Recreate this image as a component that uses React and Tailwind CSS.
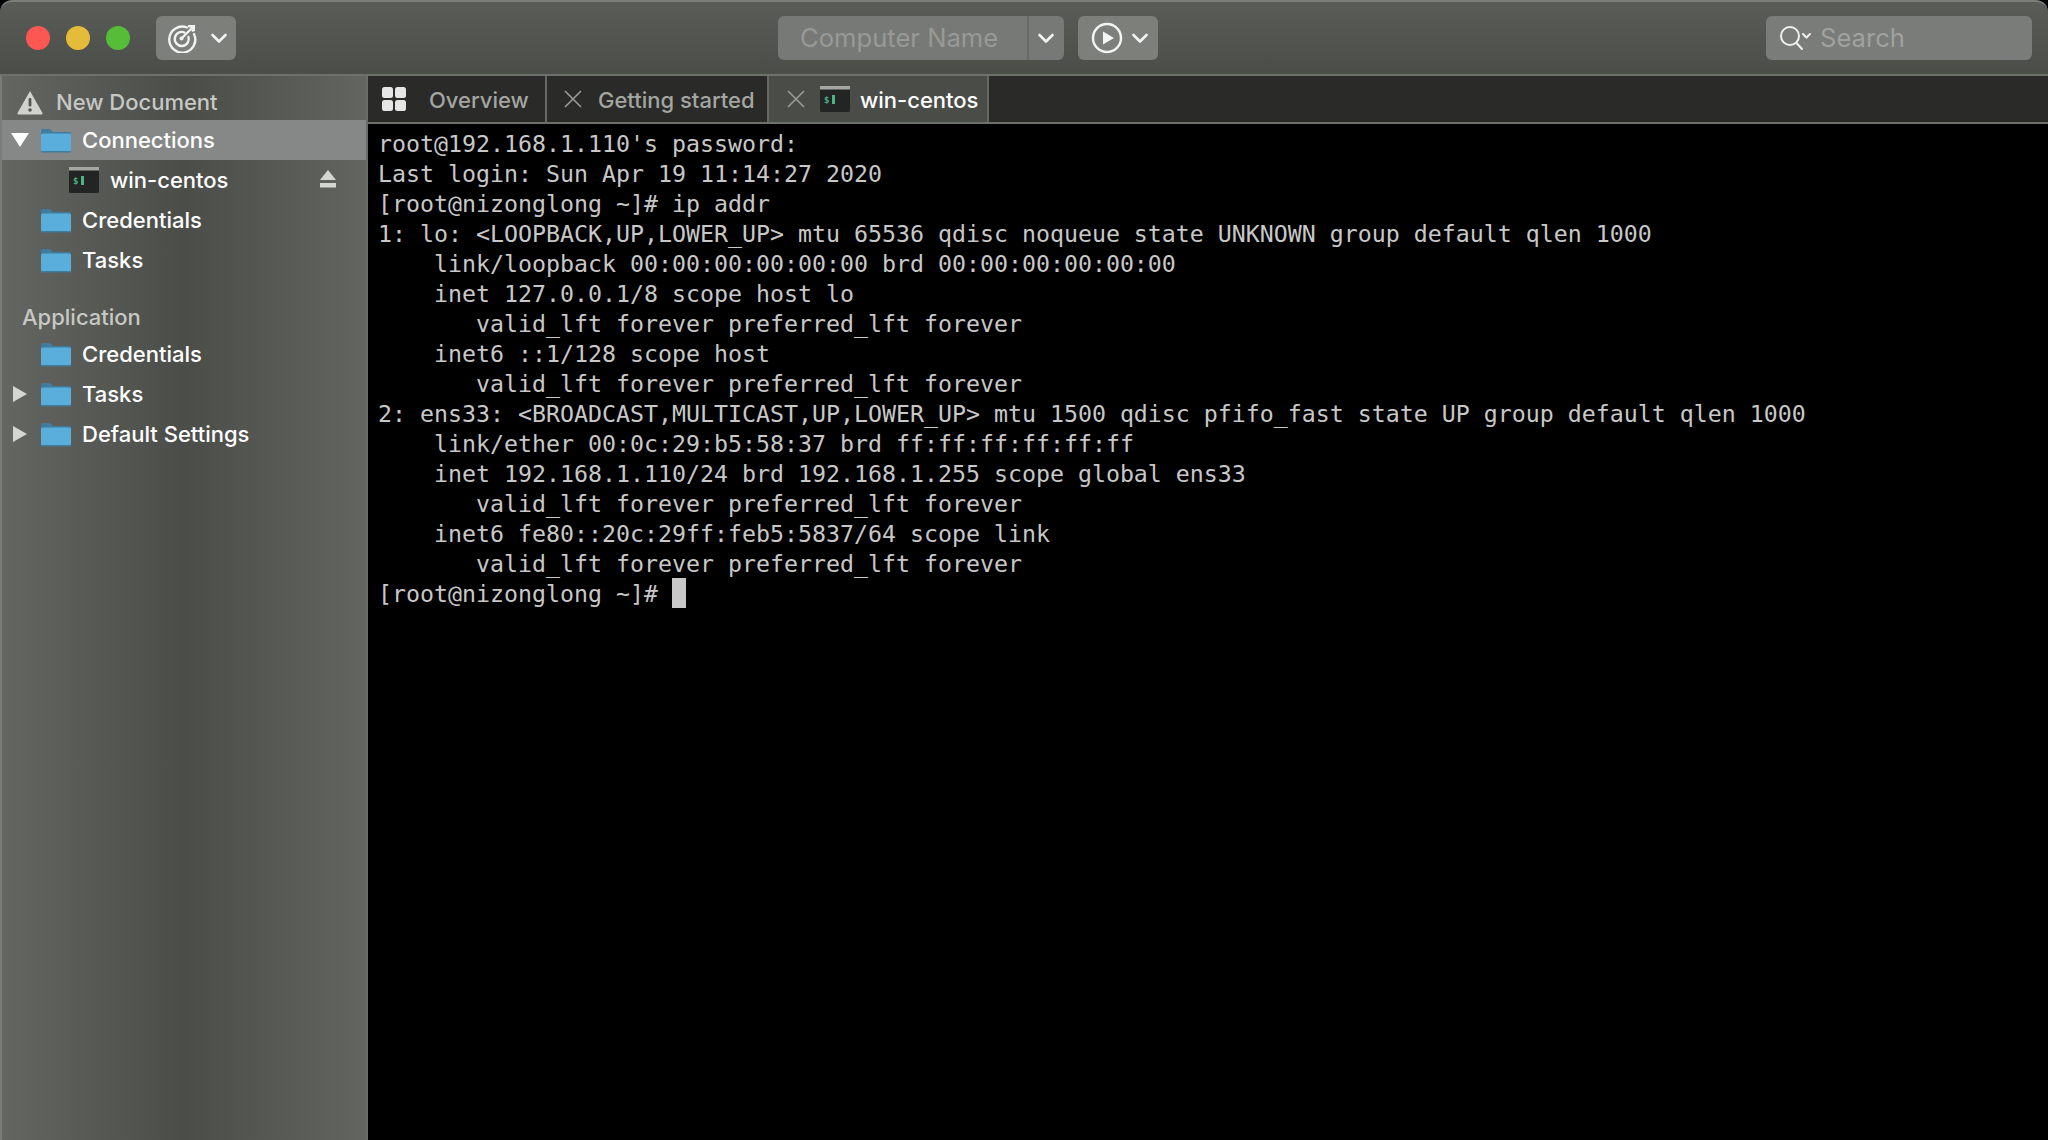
const terminalLines = [
  "root@192.168.1.110's password:",
  "Last login: Sun Apr 19 11:14:27 2020",
  "[root@nizonglong ~]# ip addr",
  "1: lo: <LOOPBACK,UP,LOWER_UP> mtu 65536 qdisc noqueue state UNKNOWN group default qlen 1000",
  "    link/loopback 00:00:00:00:00:00 brd 00:00:00:00:00:00",
  "    inet 127.0.0.1/8 scope host lo",
  "       valid_lft forever preferred_lft forever",
  "    inet6 ::1/128 scope host",
  "       valid_lft forever preferred_lft forever",
  "2: ens33: <BROADCAST,MULTICAST,UP,LOWER_UP> mtu 1500 qdisc pfifo_fast state UP group default qlen 1000",
  "    link/ether 00:0c:29:b5:58:37 brd ff:ff:ff:ff:ff:ff",
  "    inet 192.168.1.110/24 brd 192.168.1.255 scope global ens33",
  "       valid_lft forever preferred_lft forever",
  "    inet6 fe80::20c:29ff:feb5:5837/64 scope link",
  "       valid_lft forever preferred_lft forever",
];

function Chevron() {
  return (
    <svg width="16" height="11" viewBox="0 0 16 11" fill="none" stroke="#f2f2f2" strokeWidth="2.6" strokeLinecap="round" strokeLinejoin="round" className="shrink-0">
      <path d="M1.5 2l6.5 6.5L14.5 2" />
    </svg>
  );
}

function CloseIcon() {
  return (
    <svg width="18" height="18" viewBox="0 0 18 18" fill="none" stroke="#9a9c98" strokeWidth="1.6" className="shrink-0">
      <path d="M1 1l16 16M17 1L1 17" />
    </svg>
  );
}

function Folder() {
  return (
    <svg width="30" height="25" viewBox="0 0 30 25" className="shrink-0">
      <path d="M0 3a2 2 0 0 1 2-2h7l3 3h16a2 2 0 0 1 2 2v4H0z" fill="#3f7c9f" />
      <path d="M0 7a1.5 1.5 0 0 1 1.5-1.5h27A1.5 1.5 0 0 1 30 7v15a2 2 0 0 1-2 2H2a2 2 0 0 1-2-2z" fill="#5aaedb" />
      <rect x="0" y="23" width="30" height="1.5" rx="0.7" fill="#3f7c9f" />
    </svg>
  );
}

function TerminalIcon() {
  return (
    <svg width="30" height="26" viewBox="0 0 30 26" className="shrink-0">
      <rect x="0" y="0" width="30" height="26" rx="1.5" fill="#232524" />
      <rect x="0" y="0" width="30" height="3.5" fill="#a5a7a3" />
      <text x="4" y="17" fontSize="9" fontWeight="700" fill="#4fb286" fontFamily="DejaVu Sans Mono, monospace">$</text>
      <rect x="12" y="9" width="3" height="9" fill="#4fb286" />
    </svg>
  );
}

function TreeArrow({ open }) {
  return (
    <svg width="18" height="16" viewBox="0 0 18 16" className="shrink-0">
      {open ? (
        <path d="M0 1h18L9 15z" fill="#ffffff" />
      ) : (
        <path d="M2 0l14 8-14 8z" fill="#d4d6d2" />
      )}
    </svg>
  );
}

function TreeRow({ label, arrow, open, selected }) {
  return (
    <div className={`flex h-10 items-center ${selected ? "bg-[#858886]" : ""}`}>
      <div className="ml-[9px] flex w-[30px] shrink-0 items-center">
        {arrow && <TreeArrow open={open} />}
      </div>
      <Folder />
      <span className="ml-[11px] text-[22px] font-medium text-white">{label}</span>
    </div>
  );
}

export default function App() {
  return (
    <div className="flex h-[1140px] w-[2048px] flex-col overflow-hidden bg-black font-['Inter',sans-serif]">
      <div className="flex h-[76px] shrink-0 items-center rounded-t-[12px] border-t-2 border-b-2 border-t-[#7b7d79] border-b-[#6f716d] bg-gradient-to-b from-[#5a5c58] to-[#4b4d49] pl-[26px] pr-4">
        <div className="flex gap-[16px]">
          <div className="h-6 w-6 rounded-full bg-[#fd5754]" />
          <div className="h-6 w-6 rounded-full bg-[#e4bc3a]" />
          <div className="h-6 w-6 rounded-full bg-[#56bd39]" />
        </div>
        <div className="ml-[26px] flex h-11 w-20 items-center gap-[14px] rounded-[6px] bg-[#7c7f7a] pl-[11px]">
          <svg width="30" height="30" viewBox="0 0 30 30" fill="none" stroke="#f2f2f2" strokeWidth="2.4" strokeLinecap="round" className="shrink-0">
            <path d="M20 4.5A13 13 0 1 0 27 11" />
            <path d="M17.5 9.5A7 7 0 1 0 21.5 14" />
            <circle cx="14.5" cy="15.5" r="2" fill="#f2f2f2" stroke="none" />
            <path d="M15 15L24 6" />
            <path d="M21 2h7v6l-3 1-1-4-3-1z" fill="#f2f2f2" stroke="none" />
          </svg>
          <Chevron />
        </div>

        <div className="ml-[542px] flex h-11 w-[286px] items-center rounded-[6px] bg-[#767975]">
          <span className="flex-1 pl-[22px] text-[25.6px] text-[#989a96]">Computer Name</span>
          <div className="flex h-full w-[37px] items-center justify-center border-l-2 border-[#666965] pr-[2px]">
            <Chevron />
          </div>
        </div>
        <div className="ml-[14px] flex h-11 w-20 items-center gap-[9px] rounded-[6px] bg-[#7c7f7a] pl-[13px]">
          <svg width="32" height="32" viewBox="0 0 32 32" fill="none" className="shrink-0">
            <circle cx="16" cy="16" r="14" stroke="#f4f4f4" strokeWidth="2.4" />
            <path d="M12 9.5L23 16l-11 6.5z" fill="#f4f4f4" />
          </svg>
          <Chevron />
        </div>

        <div className="ml-auto flex h-11 w-[266px] items-center rounded-[6px] bg-[#797c78] pl-3">
          <svg width="34" height="30" viewBox="0 0 34 30" fill="none" stroke="#f0f0f0" strokeLinecap="round" className="shrink-0">
            <circle cx="12" cy="13" r="9" strokeWidth="2" />
            <path d="M18.5 20L24 26" strokeWidth="2" />
            <path d="M25 11l3.5 3.5L32 11" strokeWidth="2" />
          </svg>
          <span className="ml-[8px] text-[25.6px] text-[#a0a29e]">Search</span>
        </div>
      </div>

      <div className="flex min-h-0 flex-1">
        <aside className="flex w-[368px] shrink-0 flex-col border-x-2 border-l-[#7a7c78] border-r-[#6a6c68] bg-gradient-to-r from-[#646662] via-[#4b4d49] via-50% to-[#636561]">
          <div className="flex h-[44px] items-center pl-[15px] pt-[8px]">
            <svg width="26" height="25" viewBox="0 0 26 25" className="shrink-0">
              <path d="M13 1L25.5 23a1 1 0 0 1-1 1.5H1.5a1 1 0 0 1-1-1.5z" fill="#d0d2ce" />
              <rect x="11.6" y="8" width="2.8" height="8.5" rx="1" fill="#565854" />
              <circle cx="13" cy="20" r="1.8" fill="#565854" />
            </svg>
            <span className="ml-[13px] text-[22px] font-medium text-[#c6c8c4]">New Document</span>
          </div>
          <TreeRow label="Connections" arrow open selected />
          <div className="flex h-10 items-center pl-[67px] pr-[30px]">
            <TerminalIcon />
            <span className="ml-[11px] text-[22px] font-medium text-white">win-centos</span>
            <svg width="16" height="18" viewBox="0 0 16 18" className="ml-auto -translate-y-[1px]">
              <path d="M8 0l8 10H0z" fill="#d4d6d2" />
              <rect x="0" y="13" width="16" height="4.5" fill="#d4d6d2" />
            </svg>
          </div>
          <TreeRow label="Credentials" />
          <TreeRow label="Tasks" />
          <div className="flex h-[54px] items-center pl-5 pt-[19px] text-[22px] font-medium leading-none text-[#c6c8c4]">
            Application
          </div>
          <TreeRow label="Credentials" />
          <TreeRow label="Tasks" arrow />
          <TreeRow label="Default Settings" arrow />
        </aside>

        <main className="flex min-w-0 flex-1 flex-col">
          <div className="flex h-[48px] shrink-0 border-b-2 border-[#6e706c] bg-[#2a2a28] text-[22px] font-medium">
            <div className="flex w-[179px] shrink-0 items-center border-r-2 border-[#666864] pl-[14px] text-[#a3a5a1]">
              <svg width="24" height="24" viewBox="0 0 24 24" className="shrink-0" fill="#e6e6e6">
                <rect x="0" y="0" width="11" height="11" rx="2.5" />
                <rect x="13" y="0" width="11" height="11" rx="2.5" />
                <rect x="0" y="13" width="11" height="11" rx="2.5" />
                <rect x="13" y="13" width="11" height="11" rx="2.5" />
              </svg>
              <span className="ml-[23px] translate-y-[1px]">Overview</span>
            </div>
            <div className="flex w-[222px] shrink-0 items-center border-r-2 border-[#666864] pl-[17px] text-[#a3a5a1]">
              <CloseIcon />
              <span className="ml-[16px] translate-y-[1px] whitespace-nowrap">Getting started</span>
            </div>
            <div className="flex w-[220px] shrink-0 items-center border-r-2 border-[#666864] bg-[#4a4c48] pl-[18px] text-white">
              <CloseIcon />
              <div className="ml-[15px]">
                <TerminalIcon />
              </div>
              <span className="ml-[10px] translate-y-[1px]">win-centos</span>
            </div>
          </div>

          <div className="flex-1 bg-black pl-[10px] pt-[5px] font-['DejaVu_Sans_Mono',monospace] text-[23.26px] leading-[30px] text-[#c8c8c8]">
            {terminalLines.map((line, i) => (
              <div key={i} className="h-[30px] whitespace-pre">{line}</div>
            ))}
            <div className="flex h-[30px] whitespace-pre">
              <span>{"[root@nizonglong ~]# "}</span>
              <span className="h-[30px] w-[14px] -translate-y-[1px] bg-[#c8c8c8]" />
            </div>
          </div>
        </main>
      </div>
    </div>
  );
}
